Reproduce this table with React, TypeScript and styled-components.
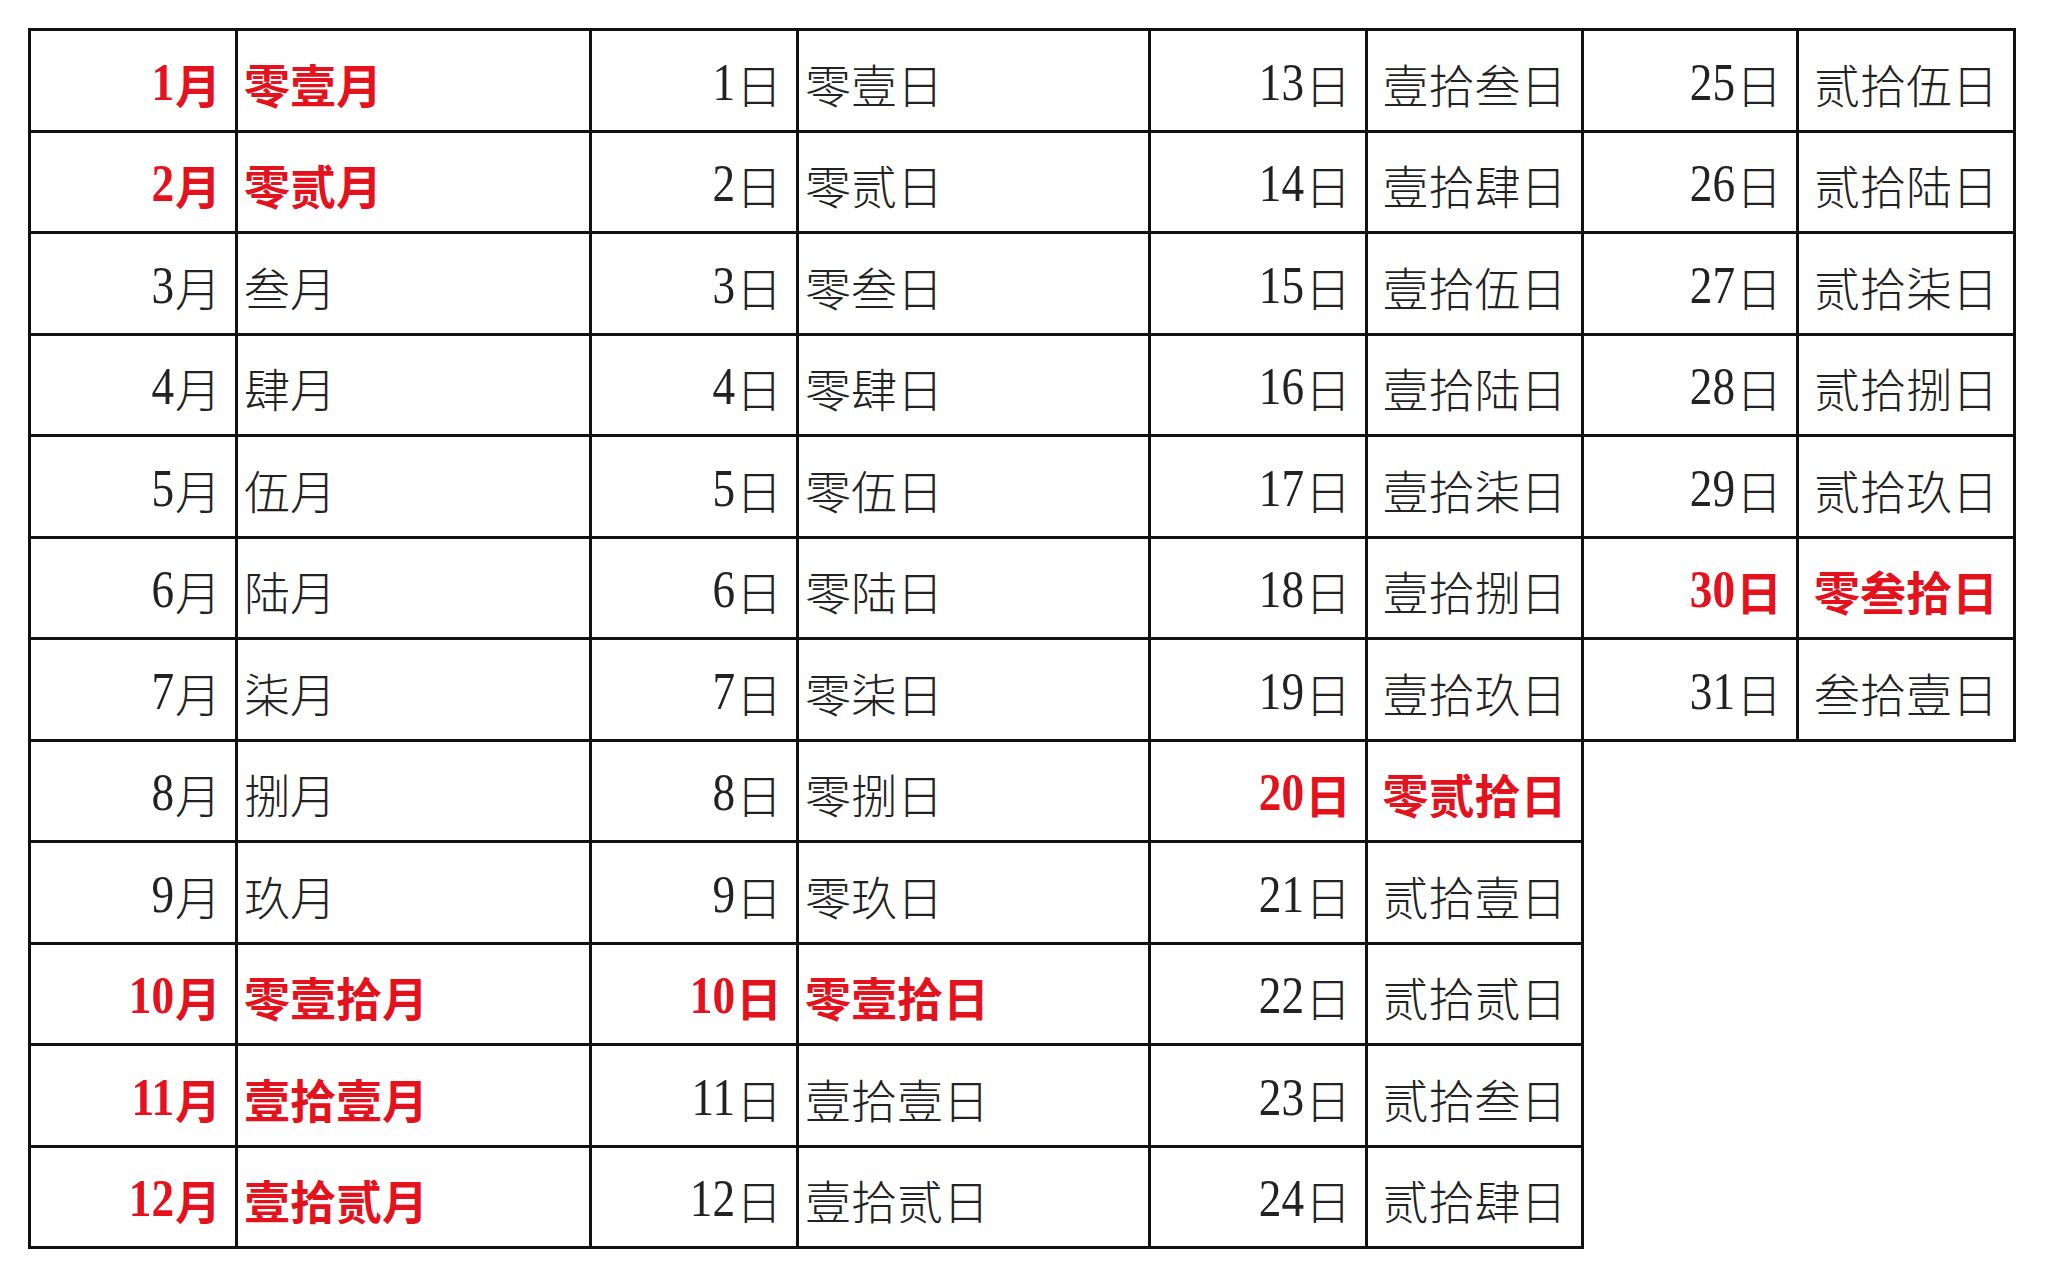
import * as React from "react";
import styled, { createGlobalStyle } from "styled-components";

const GlobalStyle = createGlobalStyle`
  html, body {
    margin: 0;
    padding: 0;
    background: #ffffff;
  }
  body {
    font-family: "Liberation Serif", "Noto Sans CJK SC", serif;
  }
`;

const Page = styled.div`
  padding: 28px 0 0 28px;
  width: 2055px;
  height: 1280px;
  box-sizing: border-box;
`;

const Sheet = styled.div`
  display: flex;
  align-items: flex-start;
  border-left: 3px solid #111;
  width: max-content;
`;

const Group = styled.div<{ numW: number; textW: number }>`
  display: grid;
  grid-template-columns: ${(p) => p.numW}px ${(p) => p.textW}px;
  grid-auto-rows: 101.5px;
  border-top: 3px solid #111;
`;

const Cell = styled.div<{ red?: boolean }>`
  display: flex;
  align-items: center;
  box-sizing: border-box;
  border-right: 3px solid #111;
  border-bottom: 3px solid #111;
  padding-top: 5px;
  color: ${(p) => (p.red ? "#e3121c" : "#222222")};
  font-weight: ${(p) => (p.red ? 700 : 300)};
  white-space: nowrap;
`;

const NumCell = styled(Cell)`
  justify-content: flex-end;
  padding-right: 14px;
`;

const TextCell = styled(Cell)<{ centered?: boolean }>`
  justify-content: ${(p) => (p.centered ? "center" : "flex-start")};
  padding-left: ${(p) => (p.centered ? 0 : 6)}px;
`;

const Digits = styled.span<{ red?: boolean }>`
  display: inline-block;
  font-family: "Liberation Serif", serif;
  font-size: 52px;
  line-height: 1;
  font-weight: ${(p) => (p.red ? 700 : 400)};
  transform: scaleX(0.87);
  transform-origin: right center;
  margin-right: 1px;
`;

const Han = styled.span`
  font-family: "Noto Sans CJK SC", "Noto Sans CJK TC", sans-serif;
  font-size: 46px;
  line-height: 1;
`;

type Row = { n: number; unit: string; cn: string; red?: boolean };

const months: Row[] = [
  { n: 1, unit: "月", cn: "零壹月", red: true },
  { n: 2, unit: "月", cn: "零贰月", red: true },
  { n: 3, unit: "月", cn: "叁月" },
  { n: 4, unit: "月", cn: "肆月" },
  { n: 5, unit: "月", cn: "伍月" },
  { n: 6, unit: "月", cn: "陆月" },
  { n: 7, unit: "月", cn: "柒月" },
  { n: 8, unit: "月", cn: "捌月" },
  { n: 9, unit: "月", cn: "玖月" },
  { n: 10, unit: "月", cn: "零壹拾月", red: true },
  { n: 11, unit: "月", cn: "壹拾壹月", red: true },
  { n: 12, unit: "月", cn: "壹拾贰月", red: true },
];

const dayNames = [
  "零壹日", "零贰日", "零叁日", "零肆日", "零伍日", "零陆日", "零柒日", "零捌日",
  "零玖日", "零壹拾日", "壹拾壹日", "壹拾贰日", "壹拾叁日", "壹拾肆日", "壹拾伍日",
  "壹拾陆日", "壹拾柒日", "壹拾捌日", "壹拾玖日", "零贰拾日", "贰拾壹日", "贰拾贰日",
  "贰拾叁日", "贰拾肆日", "贰拾伍日", "贰拾陆日", "贰拾柒日", "贰拾捌日", "贰拾玖日",
  "零叁拾日", "叁拾壹日",
];

const days: Row[] = dayNames.map((cn, i) => ({
  n: i + 1,
  unit: "日",
  cn,
  red: (i + 1) % 10 === 0,
}));

const groups = [
  { rows: months, numW: 207, textW: 354, centered: false },
  { rows: days.slice(0, 12), numW: 207, textW: 352, centered: false },
  { rows: days.slice(12, 24), numW: 217, textW: 216, centered: true },
  { rows: days.slice(24), numW: 215, textW: 217, centered: true },
];

const App = () => {
  return (
    <Page>
      <GlobalStyle />
      <Sheet>
        {groups.map((g, gi) => (
          <Group key={gi} numW={g.numW} textW={g.textW}>
            {g.rows.map((r) => (
              <React.Fragment key={r.n}>
                <NumCell red={r.red}>
                  <Digits red={r.red}>{r.n}</Digits>
                  <Han>{r.unit}</Han>
                </NumCell>
                <TextCell red={r.red} centered={g.centered}>
                  <Han>{r.cn}</Han>
                </TextCell>
              </React.Fragment>
            ))}
          </Group>
        ))}
      </Sheet>
    </Page>
  );
};

export default App;
